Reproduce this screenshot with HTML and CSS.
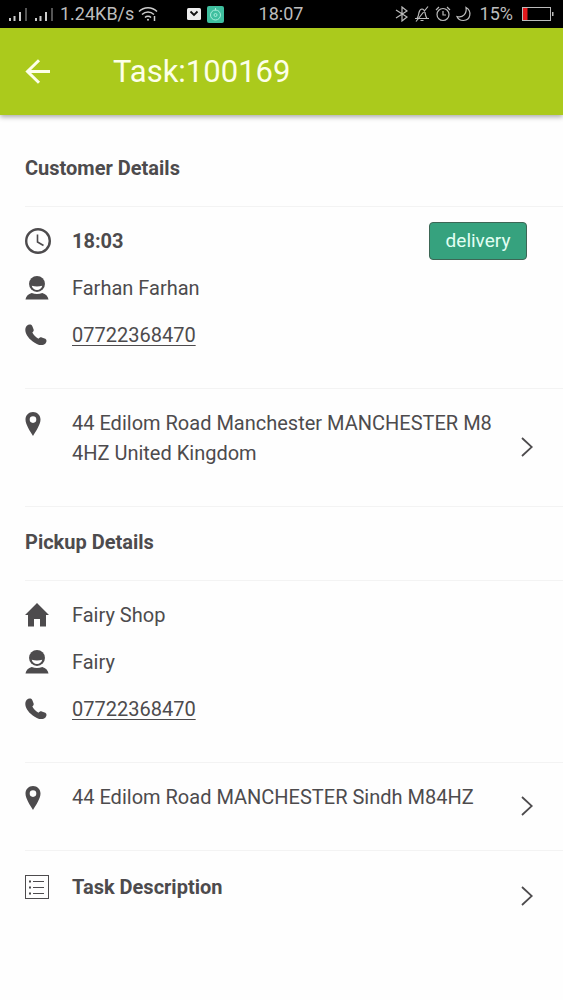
FILE: index.html
```html
<!DOCTYPE html>
<html lang="en">
<head>
<meta charset="utf-8">
<meta name="viewport" content="width=device-width, initial-scale=1">
<title>Task:100169</title>
<link rel="stylesheet" href="styles.css">
</head>
<body>
<svg width="0" height="0" class="defs" aria-hidden="true">
  <symbol id="signal" viewBox="0 0 21 16"><path d="M1 12h2v3H1zM5.500 10h2v5h-2zM11 6h2v9h-2z" fill="#ccc"/><path d="M17 2h2v13h-2z" fill="#555"/></symbol>
  <symbol id="person" viewBox="0 0 24 25"><path d="M12 0a8.300 8.300 0 1 1 0 16.600A8.300 8.300 0 0 1 12 0z"/><path d="M6.500 10.200c3.600.9 7.400.9 11 0-.6 2.700-2.700 4.400-5.500 4.400s-4.900-1.700-5.500-4.400z" fill="#fff"/><path d="M0 24.500c.6-3.700 3-5.900 6.500-6.800 3.500 1.400 7.500 1.400 11 0 3.500.9 5.900 3.100 6.500 6.800z"/></symbol>
  <symbol id="phone" viewBox="0 0 24 24"><path d="M2 2C4 0 6.800.2 7.900 2.200l1.500 3.700c.4 1.300-.1 2.200-1.400 3.500 1.200 2.700 4 5.500 6.700 6.700 1-1.300 2.300-1.900 3.600-1.500l3.900 1.600c1.800 1.100 1.700 3.600-.1 5.300-2 1.900-5.700 2-9.200.2C6.500 18.500 2.100 13.900.6 8.700 0 5.900.4 3.600 2 2z"/></symbol>
  <symbol id="pin" viewBox="0 0 16 24"><path fill-rule="evenodd" d="M8 0c4.300 0 7.500 3.200 7.500 7.500C15.500 12.500 11 19 8 24 5 19 .5 12.500.5 7.500.5 3.200 3.700 0 8 0zm0 4.300a3.300 3.300 0 1 0 0 6.600 3.300 3.300 0 0 0 0-6.600z"/></symbol>
  <symbol id="chevron" viewBox="0 0 12 20"><path d="M1 1l9.800 9L1 19" fill="none" stroke="#4d4b4d" stroke-width="1.800"/></symbol>
</svg>

<div class="status">
  <div class="status-left">
    <svg class="signal"><use href="#signal"/></svg>
    <svg class="signal"><use href="#signal"/></svg>
    <span class="speed">1.24KB/s</span>
    <svg class="wifi" viewBox="0 0 20 16" fill="none" stroke="#ccc" stroke-width="1.500"><path d="M1 5.500c5-5 13-5 18 0M4 8.500c3.500-3.400 8.500-3.400 12 0M7 11.500c1.600-1.600 4.400-1.600 6 0"/><circle cx="10" cy="13.800" r="1" fill="#ccc" stroke="none"/><path d="M16.500 10v5"/></svg>
    <svg class="mail" viewBox="0 0 14 12"><rect width="14" height="12" rx="1.500" fill="#eee"/><path d="M3.500 3.500L7 7l3.500-3.500" fill="none" stroke="#111" stroke-width="1.800"/></svg>
    <svg class="app" viewBox="0 0 17 17"><rect width="17" height="17" rx="2" fill="#3fbf9f"/><circle cx="8.500" cy="9" r="5" fill="none" stroke="#a5eedb"/><circle cx="8.500" cy="9" r="1.500" fill="none" stroke="#a5eedb"/><path d="M8.500 2v2.500" stroke="#a5eedb"/></svg>
  </div>
  <span class="time">18:07</span>
  <div class="status-right">
    <svg class="bt" viewBox="0 0 14 16" fill="none" stroke="#bbb" stroke-width="1.200"><path d="M1 4l11 7-5 4V1l5 4-11 7"/></svg>
    <svg class="glyph" viewBox="0 0 16 16" fill="none" stroke="#bbb" stroke-width="1.200"><path d="M1 12.500h14M3 12.500c1.500-2 1.500-4 2-6 .6-2.300 1.600-3.500 3-3.500s2.400 1.200 3 3.500c.5 2 .5 4 2 6M6.500 14.500h3M14 .5l-12 15"/></svg>
    <svg class="glyph" viewBox="0 0 16 16" fill="none" stroke="#bbb" stroke-width="1.200"><circle cx="8" cy="8.500" r="6"/><path d="M8 5v4h3M1 4l3-3M15 4l-3-3"/></svg>
    <svg class="glyph" viewBox="0 0 16 16" fill="none" stroke="#bbb" stroke-width="1.200"><path d="M10 1.500c6 3.500 5 12.500-2.500 13-3 .1-5.500-1.500-6.500-4 6 1.500 10-3 9-9z"/></svg>
    <span class="percent">15%</span>
    <svg class="battery" viewBox="0 0 32 14"><rect x=".5" y=".5" width="28" height="13" fill="none" stroke="#bbb"/><path d="M1 1h4.500v12H1z" fill="#e3191c"/><path d="M30 5h1.500v4H30z" fill="#bbb"/></svg>
  </div>
</div>

<header class="appbar">
  <button class="back" type="button" aria-label="Back"><svg viewBox="0 0 25 25" fill="none" stroke="#fdffe9" stroke-width="3"><path d="M25 12.500H3M14 1.200L2.500 12.500 14 23.800"/></svg></button>
  <h1 class="title">Task:100169</h1>
</header>

<main class="content">
  <section class="block">
    <h2 class="heading">Customer Details</h2>
  </section>
  <section class="block contact">
    <div class="row">
      <svg class="icon clock" viewBox="0 0 26 26" fill="none" stroke="#4d4b4d"><circle cx="13" cy="13" r="11.800" stroke-width="2.400"/><path d="M12.500 6.500v7.500l6 3.500" stroke-width="1.600"/></svg>
      <strong class="grow">18:03</strong>
      <button class="badge" type="button">delivery</button>
    </div>
    <div class="row"><svg class="icon person"><use href="#person"/></svg><span>Farhan Farhan</span></div>
    <div class="row"><svg class="icon phone"><use href="#phone"/></svg><a href="tel:07722368470">07722368470</a></div>
  </section>
  <section class="block place">
    <svg class="icon pin"><use href="#pin"/></svg>
    <p class="grow">44 Edilom Road Manchester MANCHESTER M8 4HZ United Kingdom</p>
    <button class="go" type="button" aria-label="Open customer address"><svg><use href="#chevron"/></svg></button>
  </section>
  <section class="block">
    <h2 class="heading">Pickup Details</h2>
  </section>
  <section class="block contact">
    <div class="row"><svg class="icon home" viewBox="0 0 24 24"><path d="M12 0l12 12h-3v11.500h-6V16H9v7.500H3V12H0z"/></svg><span>Fairy Shop</span></div>
    <div class="row"><svg class="icon person"><use href="#person"/></svg><span>Fairy</span></div>
    <div class="row"><svg class="icon phone"><use href="#phone"/></svg><a href="tel:07722368470">07722368470</a></div>
  </section>
  <section class="block place">
    <svg class="icon pin"><use href="#pin"/></svg>
    <p class="grow">44 Edilom Road MANCHESTER Sindh M84HZ</p>
    <button class="go" type="button" aria-label="Open pickup address"><svg><use href="#chevron"/></svg></button>
  </section>
  <section class="block place last">
    <svg class="icon list" viewBox="0 0 24 24" fill="none" stroke="#4d4b4d"><rect x=".5" y=".5" width="23" height="23"/><path d="M8 6.500h11M8 12.500h11M8 18.500h11"/><path d="M4 6.500h2M4 12.500h2M4 18.500h2" stroke-width="2"/></svg>
    <strong class="grow">Task Description</strong>
    <button class="go" type="button" aria-label="Open task description"><svg><use href="#chevron"/></svg></button>
  </section>
</main>
</body>
</html>
```
FILE: styles.css
```css
* { box-sizing: border-box; }
body {
  margin: 0;
  background: #fefefe;
  color: #4d4b4d;
  fill: #4d4b4d;
  font: 20px/30px Roboto, "Liberation Sans", sans-serif;
}
h1, h2, p { margin: 0; }
button { padding: 0; border: 0; background: none; font: inherit; color: inherit; }
svg { display: block; flex: none; }
.defs { position: absolute; }

.status {
  display: grid;
  grid-template-columns: 1fr auto 1fr;
  align-items: center;
  height: 28px;
  padding: 0 9px 0 8px;
  background: #000;
  color: #bdbdbd;
  font-size: 18px;
  line-height: 28px;
}
.status-left, .status-right { display: flex; align-items: center; }
.status-right { justify-content: flex-end; gap: 5px; }
.signal { width: 21px; height: 16px; margin-right: 5px; }
.wifi { width: 20px; height: 16px; margin-left: 4px; }
.mail { width: 14px; height: 12px; margin-left: 29px; }
.app { width: 17px; height: 17px; margin-left: 6px; }
.bt { width: 14px; height: 16px; }
.glyph { width: 16px; height: 16px; }
.percent { margin: 0 4px 0 3px; }
.battery { width: 32px; height: 14px; }

.appbar {
  display: flex;
  align-items: center;
  gap: 63px;
  height: 87px;
  padding: 0 25px;
  background: #abca1c;
  color: #fdffe9;
  box-shadow: 0 2px 5px #0005;
}
.back svg { width: 25px; height: 25px; }
.title { font-size: 31px; font-weight: 400; line-height: 40px; }

.content { padding: 18px 0 0 25px; }
.block { border-bottom: 1px solid #f3f3f3; }
.last { border-bottom: 0; }
.heading { padding: 20px 0 23px; font-size: 20px; font-weight: 700; }
strong { font-weight: 700; }
.contact { padding: 10px 36px 30px 0; }
.row { display: flex; align-items: center; height: 47px; }
.row a { color: inherit; text-underline-offset: 3px; text-decoration-thickness: 1px; }
.grow { flex: 1; }
.icon { height: 24px; }
.clock { width: 26px; height: 26px; margin-right: 21px; }
.person, .home, .list { width: 24px; margin-right: 23px; }
.phone { width: 22px; margin-right: 25px; }
.pin { width: 16px; margin-right: 31px; }
.badge {
  width: 98px;
  height: 38px;
  border: 1px solid #3d6655;
  border-radius: 4px;
  background: #36a27e;
  color: #e2fff3;
  font-size: 19px;
}
.place { display: flex; align-items: flex-start; padding: 19px 30px 38px 0; }
.place.last { padding-top: 21px; }
.place .icon { margin-top: 4px; }
.place .list { margin-top: 3px; }
.go { align-self: center; margin: -11px 0 -28px 16px; }
.go svg { width: 12px; height: 20px; }
```
